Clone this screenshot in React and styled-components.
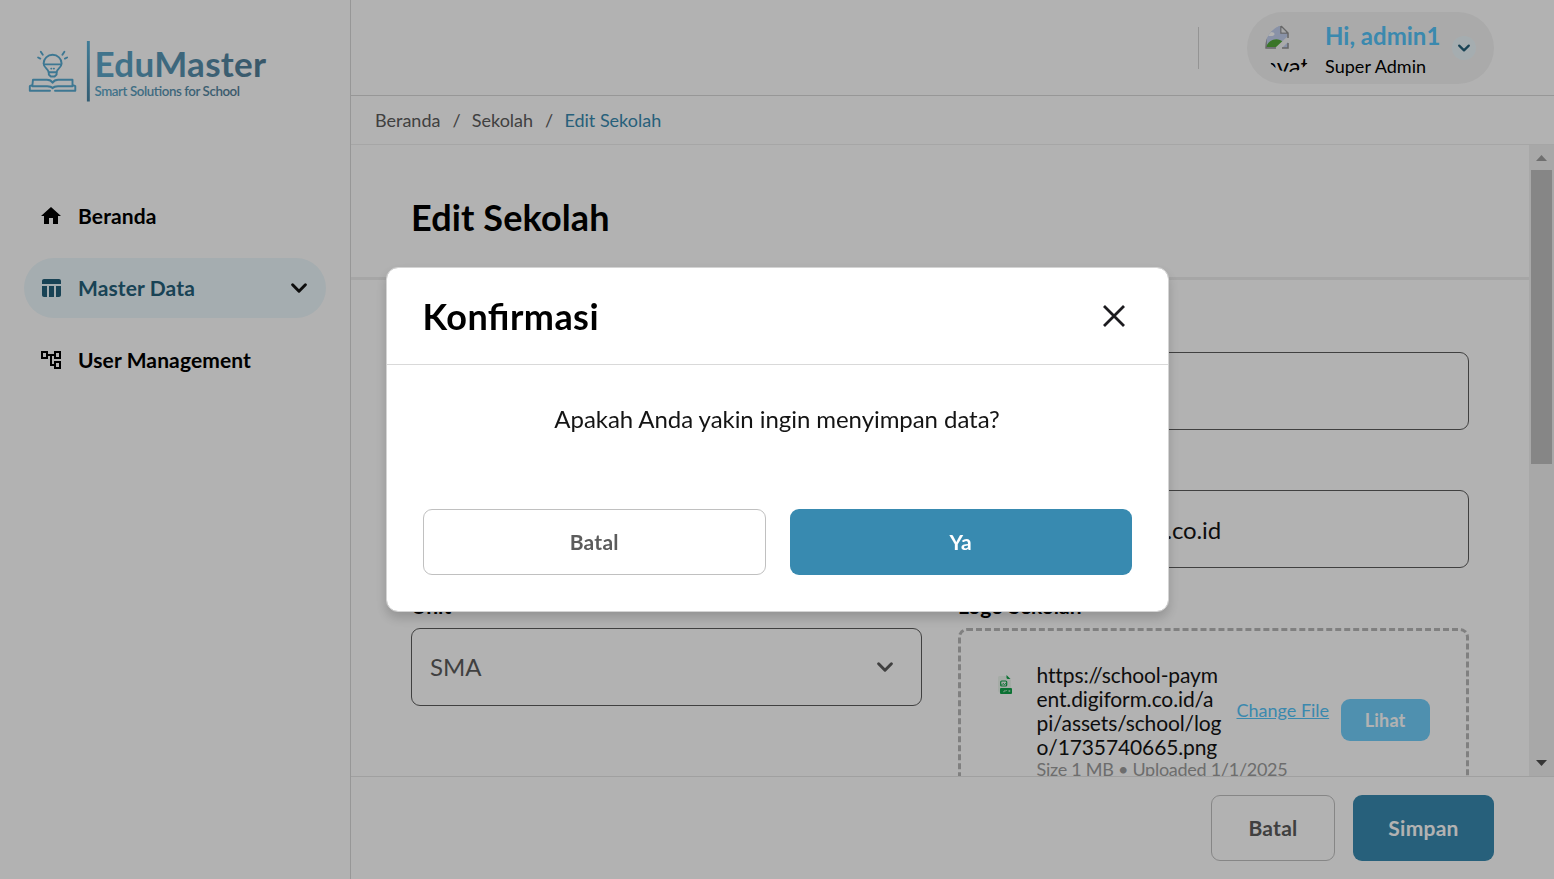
import React from "react";
import styled, { createGlobalStyle } from "styled-components";
import { MdHome, MdTableChart, MdOutlineAccountTree } from "react-icons/md";

const GlobalStyle = createGlobalStyle`
  * { box-sizing: border-box; }
  body { margin: 0; background: #fff; font-family: Lato, "Liberation Sans", sans-serif; color: #000; }
  button { font-family: inherit; cursor: pointer; }
`;

const Page = styled.div`
  display: flex;
  width: 100%;
  height: 100vh;
  overflow: hidden;
`;

const Sidebar = styled.aside`
  width: 351px;
  flex: none;
  border-right: 1px solid #d9d9d9;
  padding: 36px 24px 0;
`;

const LogoArea = styled.div`
  height: 150px;
  svg { display: block; }
`;

const Nav = styled.nav`
  display: flex;
  flex-direction: column;
  gap: 12px;
`;

const NavItem = styled.a`
  display: flex;
  align-items: center;
  gap: 15px;
  height: 60px;
  padding: 0 15px;
  border-radius: 30px;
  font-size: 21px;
  font-weight: 700;
  letter-spacing: 0.12px;
  color: ${(p) => (p.$active ? "#25607a" : "#000")};
  background: ${(p) => (p.$active ? "#edf8fc" : "transparent")};
  svg { flex: none; }
`;

const NavLabel = styled.span`
  flex: 1;
  padding-bottom: 2px;
`;

const Main = styled.main`
  flex: 1;
  min-width: 0;
  display: flex;
  flex-direction: column;
`;

const TopBar = styled.header`
  height: 96px;
  flex: none;
  border-bottom: 1px solid #d9d9d9;
  padding: 1px 60px 0 0;
  display: flex;
  align-items: center;
  justify-content: flex-end;
  gap: 48px;
`;

const Divider = styled.div`
  width: 1px;
  height: 42px;
  background: #d5d5d5;
`;

const UserPill = styled.div`
  width: 247px;
  height: 72px;
  border-radius: 36px;
  padding: 0 18px;
  background: #f4f4f4;
  display: flex;
  align-items: center;
  gap: 12px;
`;

const Avatar = styled.div`
  width: 48px;
  height: 48px;
  flex: none;
  border-radius: 50%;
  overflow: hidden;
  font-size: 24px;
  line-height: 29px;
  svg { display: block; margin-top: 1px; }
`;

const AvatarAlt = styled.div`
  margin-top: 2px;
`;

const UserText = styled.div`
  flex: 1;
  white-space: nowrap;
  padding-top: 4px;
`;

const UserName = styled.div`
  font-size: 24px;
  line-height: 29px;
  font-weight: 700;
  color: #55c4fa;
`;

const UserRole = styled.div`
  font-size: 18px;
  line-height: 27px;
  margin-top: 3px;
  letter-spacing: 0.05px;
`;

const RoundToggle = styled.div`
  width: 24px;
  height: 24px;
  border-radius: 50%;
  background: #edf8fc;
  display: flex;
  align-items: center;
  justify-content: center;
`;

const Breadcrumb = styled.div`
  height: 49px;
  flex: none;
  border-bottom: 1px solid #eeeeee;
  padding: 0 24px;
  display: flex;
  align-items: center;
  gap: 12px;
  font-size: 18px;
  color: #5c5c5c;
`;

const Crumb = styled.span`
  color: ${(p) => (p.$current ? "#388ab0" : "#5c5c5c")};
`;

const Slash = styled.span`
  margin-right: -0.8px;
`;

const ScrollArea = styled.div`
  flex: 1;
  min-height: 0;
  display: flex;
`;

const Content = styled.section`
  flex: 1;
  overflow: hidden;
`;

const TitleBar = styled.div`
  height: 135px;
  border-bottom: 3px solid #eeeeee;
  padding: 12px 60px 0;
  display: flex;
  align-items: center;
`;

const Title = styled.h1`
  margin: 0;
  font-size: 36px;
  line-height: 54px;
  font-weight: 700;
  letter-spacing: 0.12px;
  font-feature-settings: "liga" 1;
`;

const DialogTitle = styled(Title)`
  letter-spacing: 0.45px;
`;

const FormGrid = styled.div`
  display: grid;
  grid-template-columns: 511px 511px;
  column-gap: 36px;
  row-gap: 24px;
  padding: 36px 60px;
`;

const Field = styled.div`
  display: flex;
  flex-direction: column;
`;

const Label = styled.label`
  height: 36px;
  font-size: 21px;
  line-height: 27px;
  font-weight: 700;
`;

const Input = styled.div`
  height: 78px;
  border: 1px solid #5c5c5c;
  border-radius: 9px;
  padding: 0 24px 0 18px;
  display: flex;
  align-items: center;
  justify-content: space-between;
  font-size: 24px;
  letter-spacing: -0.13px;
  color: ${(p) => (p.$select ? "#5c5c5c" : "#141414")};
`;

const SelectValue = styled.span`
  padding-bottom: 2px;
  letter-spacing: 0;
`;

const UploadBox = styled.div`
  height: 210px;
  border: 3px dashed #b8b8b8;
  border-radius: 9px;
  padding: 32px 36px;
  display: flex;
  align-items: flex-start;
`;

const FileBadge = styled.div`
  width: 39.500px;
  flex: none;
  padding-top: 12px;
  svg { display: block; }
`;

const FileInfo = styled.div`
  width: 187.500px;
  flex: none;
  white-space: nowrap;
`;

const FileName = styled.div`
  font-size: 21px;
  line-height: 24px;
  color: #141414;
  white-space: pre-line;
  font-variant-ligatures: none;
  letter-spacing: -0.12px;
`;

const FileMeta = styled.div`
  font-size: 18px;
  line-height: 21px;
  color: #9c9c9c;
  letter-spacing: -0.27px;
`;

const ChangeLink = styled.a`
  margin: 35px 11.500px 0 12.500px;
  font-size: 18px;
  line-height: 24px;
  color: #55c4fa;
  text-decoration: underline;
  white-space: nowrap;
`;

const ViewButton = styled.button`
  margin-top: 36px;
  width: 89px;
  height: 42px;
  flex: none;
  border: 0;
  border-radius: 9px;
  padding: 0;
  background: #72cffb;
  color: #fff;
  font-size: 18px;
  font-weight: 700;
  letter-spacing: 0.2px;
`;

const Scrollbar = styled.div`
  width: 25px;
  flex: none;
  background: #f1f1f1;
  display: flex;
  flex-direction: column;
  align-items: center;
`;

const ScrollArrow = styled.svg`
  display: block;
  flex: none;
  width: 25px;
  height: 25px;
`;

const ScrollThumb = styled.div`
  width: 21px;
  height: 294px;
  background: #c1c1c1;
  margin-bottom: auto;
`;

const Footer = styled.footer`
  height: 103px;
  flex: none;
  border-top: 1px solid #e6e6e6;
  padding: 18px 60px;
  display: flex;
  justify-content: flex-end;
  gap: 18px;
`;

const Button = styled.button`
  width: ${(p) => p.$width || "auto"};
  flex: ${(p) => (p.$width ? "none" : "1 1 0")};
  height: 66px;
  border-radius: 9px;
  border: ${(p) => (p.$primary ? "0" : "1px solid #c0c0c0")};
  background: ${(p) => (p.$primary ? "#388ab0" : "#fff")};
  color: ${(p) => (p.$primary ? "#fff" : "#5c5c5c")};
  font-size: 21px;
  font-weight: 700;
  letter-spacing: 0.25px;
  padding: 0 0 2px;
`;

const Overlay = styled.div`
  position: fixed;
  inset: 0;
  background: rgba(0, 0, 0, 0.3);
  display: flex;
  align-items: center;
  justify-content: center;
`;

const Dialog = styled.div`
  width: 783px;
  height: 345px;
  background: #fff;
  background-clip: padding-box;
  border: 1px solid #d4d4d4;
  border-radius: 12px;
  box-shadow: 0 6px 12px rgba(0, 0, 0, 0.18);
`;

const DialogHeader = styled.div`
  height: 97px;
  border-bottom: 1px solid #d9d9d9;
  padding: 0 36px 1px;
  display: flex;
  align-items: center;
  justify-content: space-between;
`;

const DialogText = styled.p`
  margin: 0;
  height: 144px;
  padding-top: 36px;
  font-size: 24px;
  line-height: 36px;
  text-align: center;
  color: #141414;
  letter-spacing: -0.06px;
`;

const DialogActions = styled.div`
  display: flex;
  gap: 24px;
  padding: 0 36px;
`;

const Chevron = ({ size = 24, color = "#141414", width = 3 }) => (
  <svg width={size} height={size} viewBox="0 0 24 24" fill="none">
    <path d="M5.6 8.8 12 15.2l6.4-6.4" stroke={color} strokeWidth={width} strokeLinecap="round" strokeLinejoin="round" />
  </svg>
);

const Logo = () => (
  <svg width="246" height="70" viewBox="24 36 246 70">
    <defs>
      <linearGradient id="word" x1="0" x2="1" y1="0" y2="0">
        <stop offset="0" stopColor="#5ea9cc" />
        <stop offset="1" stopColor="#527d96" />
      </linearGradient>
      <linearGradient id="rule" x1="0" x2="0" y1="0" y2="1">
        <stop offset="0" stopColor="#5cb2d9" />
        <stop offset="1" stopColor="#4a86a5" />
      </linearGradient>
    </defs>
    <g fill="none" stroke="#58abd2" strokeWidth="1.9" strokeLinecap="round" strokeLinejoin="round">
      <path d="M48.6 72.2c0-3-5-4.400-5-8.800a9 8.600 0 0 1 18 0c0 4.400-5 5.800-5 8.800z" />
      <path d="M44 64.400h17.200M48.800 72.400v2.100l2 2h3.800l2-2v-2.100M51.200 68.600h.2M53.800 68.600h.2" />
      <path d="M42.800 54.800l-2-3M40.300 58.600l-2.200-1.100M62.400 54.800l2-3M64.900 58.600l2.200-1.100" />
      <path d="M33 79.700h14c3 0 4.600 1.200 5.600 3 1-1.800 2.600-3 5.600-3h14.300v6.500H58c-3 0-4.400.6-5.400 2-1-1.400-2.400-2-5.400-2H32.300zM32 85.200l-2.200 1v4.500H50M73 85.200l2.300 1v4.500H55" />
    </g>
    <rect x="86.900" y="41" width="2.900" height="60.500" fill="url(#rule)" />
    <text x="94.500" y="77" fontSize="35" fontWeight="700" textLength="171.500" fill="url(#word)">EduMaster</text>
    <text x="94.500" y="96" fontSize="13.300" fontWeight="600" textLength="145.500" fill="url(#word)">Smart Solutions for School</text>
  </svg>
);

const BrokenImage = () => (
  <svg width="24" height="24" viewBox="0 0 24 24">
    <path d="M1 1h15l7 7v15H1z" fill="#c5d2f0" />
    <path d="M1 1h15v6h7v5L11 23H1z" fill="#c5d2f0" />
    <ellipse cx="5.500" cy="9" rx="4" ry="2" fill="#fff" />
    <path d="M1 22c3-8 12-10 17-5l-5 5z" fill="#54a83a" />
    <path d="M23 11 10 23h7l6-6z" fill="#f4f4f4" />
    <path d="M1 8v15h10M17 23h6v-5M16 1v7h7M16 1l7 7v5" fill="none" stroke="#929292" strokeWidth="1.500" />
    <path d="M16.500 2.500v5h5z" fill="#f0f0f0" />
  </svg>
);

const FileIcon = () => (
  <svg width="18" height="20" viewBox="0 0 18 20">
    <path d="M2 1h8l4 4v13H4a3 3 0 0 1-3-3V2z" fill="#eef7f0" />
    <path d="M9.500 0l4 4h-2.500q-1.500 0-1.500-1.500z" fill="#11a34a" />
    <rect x="3.700" y="6" width="6" height="5" rx="1" fill="none" stroke="#11a34a" strokeWidth="1.200" />
    <path d="M4 10.500l2-2 1.500 1 1.200-1 1 1.500" fill="none" stroke="#11a34a" />
    <rect x="3" y="13" width="12" height="6" rx="1" fill="#11a34a" />
    <path d="M6 16.700h1.500v-1.500M8.600 16.500v-1h1.500M11.500 15.500h1.500v1h-1.500" fill="none" stroke="#bfe5cb" strokeWidth=".7" />
  </svg>
);

export default function App() {
  return (
    <>
      <GlobalStyle />
      <Page>
        <Sidebar>
          <LogoArea><Logo /></LogoArea>
          <Nav>
            <NavItem><MdHome size={24} /><NavLabel>Beranda</NavLabel></NavItem>
            <NavItem $active><MdTableChart size={24} /><NavLabel>Master Data</NavLabel><Chevron /></NavItem>
            <NavItem><MdOutlineAccountTree size={24} /><NavLabel>User Management</NavLabel></NavItem>
          </Nav>
        </Sidebar>
        <Main>
          <TopBar>
            <Divider />
            <UserPill>
              <Avatar><BrokenImage /><AvatarAlt>avatar</AvatarAlt></Avatar>
              <UserText>
                <UserName>Hi, admin1</UserName>
                <UserRole>Super Admin</UserRole>
              </UserText>
              <RoundToggle><Chevron size={18} color="#25607a" /></RoundToggle>
            </UserPill>
          </TopBar>
          <Breadcrumb>
            <Crumb>Beranda</Crumb><Slash>/</Slash><Crumb>Sekolah</Crumb><Slash>/</Slash><Crumb $current>Edit Sekolah</Crumb>
          </Breadcrumb>
          <ScrollArea>
            <Content>
              <TitleBar><Title>Edit Sekolah</Title></TitleBar>
              <FormGrid>
                <Field><Label>Nama Sekolah</Label><Input /></Field>
                <Field><Label>Alamat</Label><Input /></Field>
                <Field><Label>Telepon</Label><Input /></Field>
                <Field><Label>Email</Label><Input>admin.1@digiform.co.id</Input></Field>
                <Field><Label>Unit</Label><Input $select><SelectValue>SMA</SelectValue><Chevron color="#5c5c5c" /></Input></Field>
                <Field>
                  <Label>Logo Sekolah</Label>
                  <UploadBox>
                    <FileBadge><FileIcon /></FileBadge>
                    <FileInfo>
                      <FileName>{"https://school-paym\nent.digiform.co.id/a\npi/assets/school/log\no/1735740665.png"}</FileName>
                      <FileMeta>Size 1 MB • Uploaded 1/1/2025</FileMeta>
                    </FileInfo>
                    <ChangeLink>Change File</ChangeLink>
                    <ViewButton>Lihat</ViewButton>
                  </UploadBox>
                </Field>
              </FormGrid>
            </Content>
            <Scrollbar>
              <ScrollArrow viewBox="0 0 25 25"><path d="M7 16l5.500-6 5.500 6z" fill="#a0a0a0" /></ScrollArrow>
              <ScrollThumb />
              <ScrollArrow viewBox="0 0 25 25"><path d="M7 9l5.500 6L18 9z" fill="#505050" /></ScrollArrow>
            </Scrollbar>
          </ScrollArea>
          <Footer>
            <Button $width="124px">Batal</Button>
            <Button $width="141px" $primary>Simpan</Button>
          </Footer>
        </Main>
      </Page>
      <Overlay>
        <Dialog role="dialog" aria-modal="true">
          <DialogHeader>
            <DialogTitle as="h2">Konfirmasi</DialogTitle>
            <svg width="36" height="36" viewBox="0 0 36 36"><path d="M8 8l20 20M28 8L8 28" stroke="#1c1b1f" strokeWidth="2.800" /></svg>
          </DialogHeader>
          <DialogText>Apakah Anda yakin ingin menyimpan data?</DialogText>
          <DialogActions>
            <Button>Batal</Button>
            <Button $primary>Ya</Button>
          </DialogActions>
        </Dialog>
      </Overlay>
    </>
  );
}
